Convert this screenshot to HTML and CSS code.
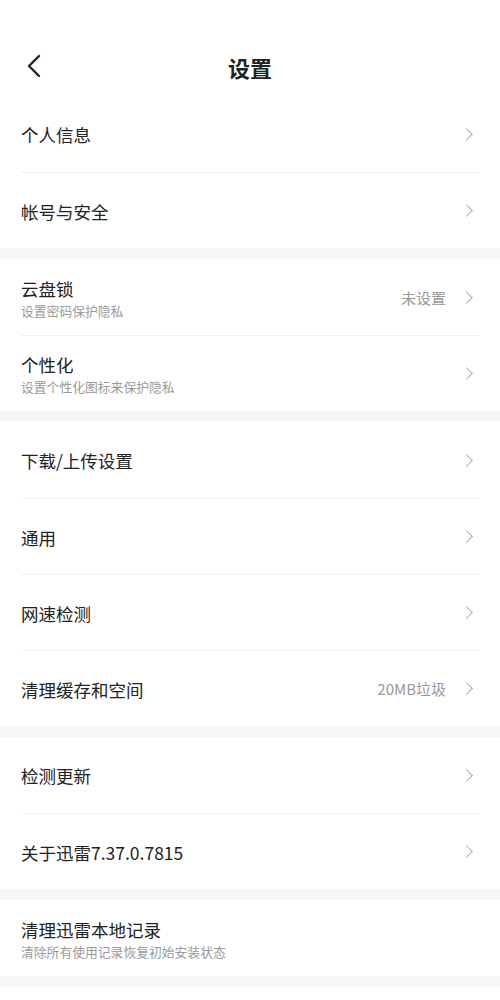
FILE: index.html
```html
<!DOCTYPE html>
<html lang="zh-CN">
<head>
    <meta charset="UTF-8">
    <meta name="viewport" content="width=device-width, initial-scale=1.0">
    <title>设置</title>
    <link rel="stylesheet" href="styles.css">
</head>
<body>
    <header class="topbar">
        <button class="back" aria-label="返回">
            <svg width="14" height="24" viewBox="0 0 14 24"><polyline points="12,2 2,12 12,22" fill="none" stroke="#222" stroke-width="2.4" stroke-linecap="round" stroke-linejoin="round"/></svg>
        </button>
        <h1>设置</h1>
    </header>

    <main class="groups">
        <section class="group">
            <div class="row"><div class="row-text"><span class="row-title">个人信息</span></div><span class="chevron"></span></div>
            <div class="row"><div class="row-text"><span class="row-title">帐号与安全</span></div><span class="chevron"></span></div>
        </section>

        <section class="group">
            <div class="row">
                <div class="row-text"><span class="row-title">云盘锁</span><span class="row-sub">设置密码保护隐私</span></div>
                <span class="row-value">未设置</span><span class="chevron"></span>
            </div>
            <div class="row">
                <div class="row-text"><span class="row-title">个性化</span><span class="row-sub">设置个性化图标来保护隐私</span></div>
                <span class="chevron"></span>
            </div>
        </section>

        <section class="group">
            <div class="row"><div class="row-text"><span class="row-title">下载/上传设置</span></div><span class="chevron"></span></div>
            <div class="row"><div class="row-text"><span class="row-title">通用</span></div><span class="chevron"></span></div>
            <div class="row"><div class="row-text"><span class="row-title">网速检测</span></div><span class="chevron"></span></div>
            <div class="row"><div class="row-text"><span class="row-title">清理缓存和空间</span></div><span class="row-value">20MB垃圾</span><span class="chevron"></span></div>
        </section>

        <section class="group">
            <div class="row"><div class="row-text"><span class="row-title">检测更新</span></div><span class="chevron"></span></div>
            <div class="row"><div class="row-text"><span class="row-title">关于迅雷7.37.0.7815</span></div><span class="chevron"></span></div>
        </section>

        <section class="group">
            <div class="row">
                <div class="row-text"><span class="row-title">清理迅雷本地记录</span><span class="row-sub">清除所有使用记录恢复初始安装状态</span></div>
            </div>
        </section>
    </main>
</body>
</html>
```

FILE: styles.css
```css
* { box-sizing: border-box; }
body { margin: 0; background: #fff; font-family: "Noto Sans CJK SC", "Noto Sans", sans-serif; color: #222; }

.topbar { height: 96px; display: flex; align-items: center; justify-content: center; position: relative; padding-top: 38px; }
.topbar h1 { margin: 0; font-size: 22px; line-height: 30px; font-weight: bold; color: #222; }
.back { position: absolute; left: 22px; top: 52px; width: 24px; height: 28px; padding: 0; border: none; background: none; display: flex; align-items: center; justify-content: center; }

.groups { display: flex; flex-direction: column; gap: 11px; background: #f6f6f8; padding-bottom: 11px; }
.group { background: #fff; }

.row { height: 76px; margin: 0 20px 0 21px; padding-right: 6px; display: flex; align-items: center; }
.row + .row { border-top: 1px solid #f0f0f0; }
.row-text { flex: 1; display: flex; flex-direction: column; padding-top: 2px; }
.row-title { font-size: 17.5px; line-height: 24px; color: #222; }
.row-sub { font-size: 12.8px; line-height: 18px; color: #9a9a9a; margin-top: 1px; }
.row-value { font-size: 15px; color: #999; margin-right: 19px; }

.chevron { width: 9px; height: 13px; position: relative; }
.chevron::before { content: ""; position: absolute; left: -3px; top: 2px; width: 8px; height: 8px; border-top: 1.4px solid #aaa; border-right: 1.4px solid #aaa; transform: rotate(45deg); }
```
